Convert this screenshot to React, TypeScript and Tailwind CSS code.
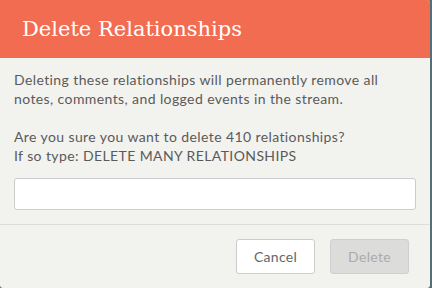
export default function App() {
  return (
    <div className="w-[432px] h-[288px] bg-[#566e76] overflow-hidden">
      <div
        className="w-[430px] h-[288px] bg-[#f2f2ef] rounded-r-[3px] rounded-bl-[3px] overflow-hidden flex flex-col"
        style={{ fontFamily: 'Lato, "Open Sans", sans-serif' }}
      >
        {/* Header */}
        <div className="h-[58px] bg-[#f26c51] flex items-center px-[22px]">
          <h2
            className="text-white text-[21px] leading-none"
            style={{ fontFamily: '"DejaVu Serif", serif' }}
          >
            Delete Relationships
          </h2>
        </div>

        {/* Body */}
        <div className="px-[14px] pt-[12px] text-[14px] leading-[19px] tracking-[0.4px] text-[#5a5a5a]">
          <p>
            Deleting these relationships will permanently remove all
            <br />
            notes, comments, and logged events in the stream.
          </p>
          <p className="mt-[19px]">
            Are you sure you want to delete 410 relationships?
            <br />
            If so type: DELETE MANY RELATIONSHIPS
          </p>
          <input
            type="text"
            className="mt-[13px] block w-[402px] h-[32px] bg-white border border-[#cccccc] rounded-[3px] outline-none"
          />
        </div>

        {/* Footer */}
        <div className="mt-[14px] border-t border-[#dddddd] flex justify-end gap-[15px] pr-[21px] pt-[14px]">
          <button className="w-[79px] h-[35px] bg-white border border-[#cccccc] rounded-[3px] text-[14px] tracking-[0.3px] text-[#666666]">
            Cancel
          </button>
          <button
            disabled
            className="w-[79px] h-[35px] bg-[#dcdcdb] border border-[#cfcfcf] rounded-[3px] text-[14px] tracking-[0.3px] text-[#ababab]"
          >
            Delete
          </button>
        </div>
      </div>
    </div>
  );
}
